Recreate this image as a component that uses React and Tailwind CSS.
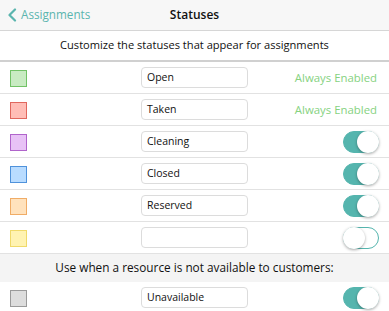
const rows = [
  { label: "Open", fill: "bg-[#c8ebc2]", border: "border-[#71c266]", right: "always" },
  { label: "Taken", fill: "bg-[#ffbdb6]", border: "border-[#e0675e]", right: "always" },
  { label: "Cleaning", fill: "bg-[#e8c2f6]", border: "border-[#b064cb]", right: "on" },
  { label: "Closed", fill: "bg-[#b9dcff]", border: "border-[#4f92db]", right: "on" },
  { label: "Reserved", fill: "bg-[#ffe2bd]", border: "border-[#f0ac66]", right: "on" },
  { label: "", fill: "bg-[#fff3b2]", border: "border-[#f0da6a]", right: "off" },
];

function Toggle({ on }) {
  return (
    <div
      className={`relative h-[22px] w-[36px] rounded-full border ${
        on ? "border-[#55b5ae] bg-[#55b5ae]" : "border-[#55b5ae] bg-white"
      }`}
    >
      <div
        className={`absolute top-[-1px] h-[22px] w-[22px] rounded-full bg-white shadow-[0_1px_3px_rgba(0,0,0,0.35)] ${
          on ? "right-[-1px]" : "left-[-1px]"
        }`}
      />
    </div>
  );
}

function StatusRow({ row }) {
  return (
    <div className="grid h-[32px] grid-cols-[1fr_107px_1fr] items-center border-b border-[#e2e2e2] bg-white">
      <div className="pl-[10px] pt-[1px]">
        <div className={`h-[17px] w-[17px] border ${row.fill} ${row.border}`} />
      </div>
      <div className="flex h-[21px] items-center rounded-[4px] border border-[#dcdcdc] bg-white px-[5px] text-[10.5px] text-[#111]">
        {row.label}
      </div>
      <div className="flex justify-end pr-[10px]">
        {row.right === "always" ? (
          <span className="pr-[2px] text-[11.4px] text-[#86d27f]">Always Enabled</span>
        ) : (
          <Toggle on={row.right === "on"} />
        )}
      </div>
    </div>
  );
}

export default function App() {
  return (
    <div className="h-[311px] w-[389px] overflow-hidden bg-white font-['Open_Sans',sans-serif] text-[#111]">
      <header className="relative flex h-[31px] items-center justify-center border-b border-[#d6d6d6] bg-[#f7f7f7]">
        <div className="absolute left-[7px] top-0 flex h-full items-center gap-[4px] text-[#5ab5ae]">
          <svg width="10" height="14" viewBox="0 0 10 14" fill="none">
            <path d="M8 1.5 L2.5 7 L8 12.5" stroke="#5ab5ae" strokeWidth="2.2" strokeLinecap="round" strokeLinejoin="round" />
          </svg>
          <span className="text-[11.7px]">Assignments</span>
        </div>
        <h1 className="text-[12px] font-semibold text-[#111]">Statuses</h1>
      </header>
      <div className="flex h-[31px] items-center justify-center border-b-2 border-[#d0d0d0] text-[11.1px]">
        Customize the statuses that appear for assignments
      </div>
      {rows.map((row, i) => (
        <StatusRow key={i} row={row} />
      ))}
      <div className="flex h-[28px] items-center justify-center bg-[#f4f4f4] text-[11.8px]">
        Use when a resource is not available to customers:
      </div>
      <StatusRow
        row={{ label: "Unavailable", fill: "bg-[#dddddd]", border: "border-[#9a9a9a]", right: "on" }}
      />
    </div>
  );
}
